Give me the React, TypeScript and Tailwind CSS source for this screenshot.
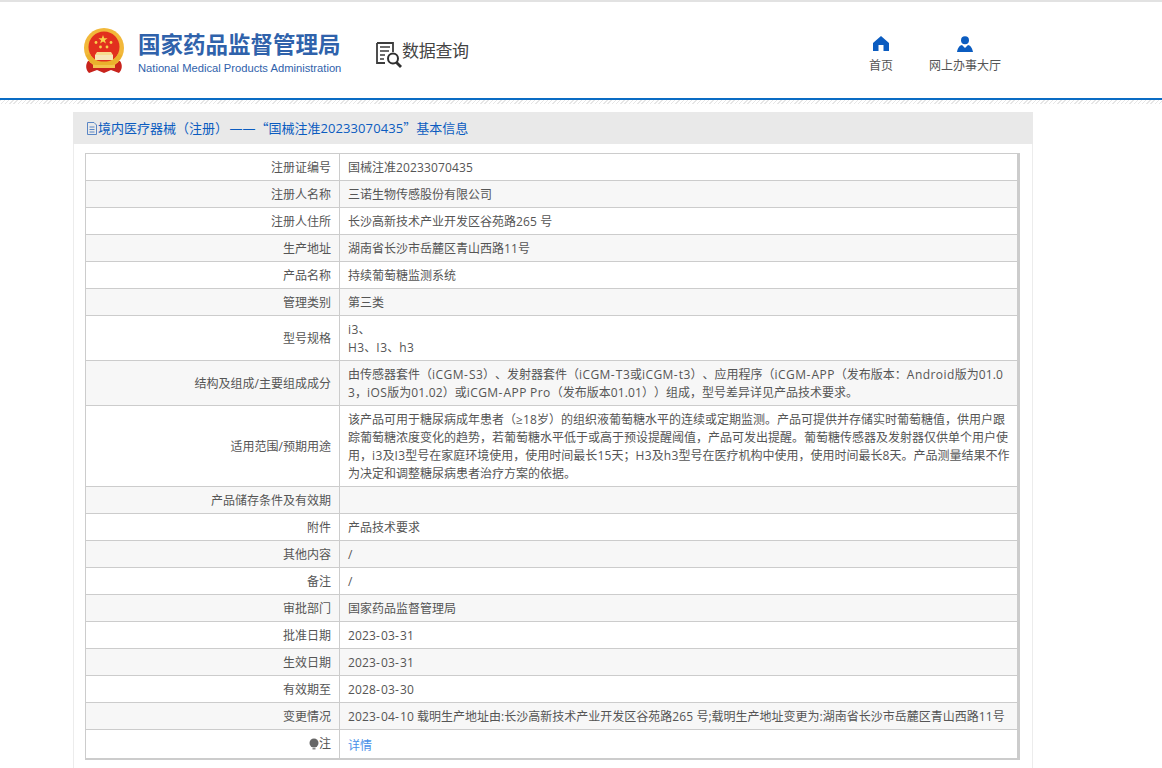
import React from "react";

const FONT = "font-['Open_Sans','Noto_Sans_CJK_SC',sans-serif]";

const rows: { label: string; value: string }[] = [
  { label: "注册证编号", value: "国械注准20233070435" },
  { label: "注册人名称", value: "三诺生物传感股份有限公司" },
  { label: "注册人住所", value: "长沙高新技术产业开发区谷苑路265 号" },
  { label: "生产地址", value: "湖南省长沙市岳麓区青山西路11号" },
  { label: "产品名称", value: "持续葡萄糖监测系统" },
  { label: "管理类别", value: "第三类" },
  { label: "型号规格", value: "i3、\nH3、I3、h3" },
  {
    label: "结构及组成/主要组成成分",
    value: "由传感器套件（iCGM-S3）、发射器套件（iCGM-T3或iCGM-t3）、应用程序（iCGM-APP（发布版本：Android版为01.0\n3，iOS版为01.02）或iCGM-APP Pro（发布版本01.01））组成，型号差异详见产品技术要求。",
  },
  {
    label: "适用范围/预期用途",
    value: "该产品可用于糖尿病成年患者（≥18岁）的组织液葡萄糖水平的连续或定期监测。产品可提供并存储实时葡萄糖值，供用户跟\n踪葡萄糖浓度变化的趋势，若葡萄糖水平低于或高于预设提醒阈值，产品可发出提醒。葡萄糖传感器及发射器仅供单个用户使\n用，i3及I3型号在家庭环境使用，使用时间最长15天；H3及h3型号在医疗机构中使用，使用时间最长8天。产品测量结果不作\n为决定和调整糖尿病患者治疗方案的依据。",
  },
  { label: "产品储存条件及有效期", value: "" },
  { label: "附件", value: "产品技术要求" },
  { label: "其他内容", value: "/" },
  { label: "备注", value: "/" },
  { label: "审批部门", value: "国家药品监督管理局" },
  { label: "批准日期", value: "2023-03-31" },
  { label: "生效日期", value: "2023-03-31" },
  { label: "有效期至", value: "2028-03-30" },
  { label: "变更情况", value: "2023-04-10 载明生产地址由:长沙高新技术产业开发区谷苑路265 号;载明生产地址变更为:湖南省长沙市岳麓区青山西路11号" },
];

function Mixed({ text }: { text: string }) {
  return (
    <>
      {text.split(/([A-Za-z]+|[0-9.]+|-)/).map((part, i) => {
        if (i % 2 === 0) return part;
        if (part === "-") return <span key={i} className="tracking-[1.1px]">{part}</span>;
        if (/[A-Za-z]/.test(part)) return <span key={i} className="tracking-[0.45px]">{part}</span>;
        return <span key={i} className="tracking-[0.14px]">{part}</span>;
      })}
    </>
  );
}

function Emblem() {
  return (
    <svg width="44" height="46" viewBox="0 0 44 46" className="block">
      <path d="M6 33 C3 37 4 42 7 45 L15 42 L22 45 L29 42 L37 45 C40 42 41 37 38 33 Z" fill="#c8231c" />
      <circle cx="22" cy="20" r="20" fill="#f2b83a" />
      <circle cx="22" cy="19" r="15.5" fill="#e2301e" />
      <polygon points="21,7 22.2,10.2 25.6,10.2 22.9,12.3 23.9,15.6 21,13.6 18.1,15.6 19.1,12.3 16.4,10.2 19.8,10.2" fill="#f8d34a" />
      <circle cx="14" cy="14.5" r="1.4" fill="#f8d34a" />
      <circle cx="29" cy="14.5" r="1.4" fill="#f8d34a" />
      <circle cx="18.5" cy="19" r="1.4" fill="#f8d34a" />
      <circle cx="25" cy="19" r="1.4" fill="#f8d34a" />
      <path d="M15 24 H29 L31 27 H13 Z" fill="#f7dc8e" />
      <rect x="13" y="27" width="18" height="5" fill="#f7e7b8" />
      <path d="M4 27 C7 36 15 38 22 38 C29 38 37 36 40 27 L36 26 C33 32 28 33.5 22 33.5 C16 33.5 11 32 8 26 Z" fill="#eab12c" />
      <path d="M11 37 H33 V40 H11 Z" fill="#f3c44c" />
    </svg>
  );
}

function QueryIcon() {
  return (
    <svg width="26" height="26" viewBox="0 0 26 26" className="block" fill="none">
      <path d="M1 1 H17 V10 M1 1 V21 H9" stroke="#3c3c3c" strokeWidth="1.8" />
      <path d="M4 5 H14 M4 9 H13 M4 13 H9 M4 17 H8" stroke="#3c3c3c" strokeWidth="1.6" />
      <circle cx="17" cy="16.5" r="5" stroke="#2f2f2f" strokeWidth="2" />
      <path d="M20.5 20.5 L25 25" stroke="#2f2f2f" strokeWidth="2.8" />
    </svg>
  );
}

export default function App() {
  return (
    <div className={`${FONT} h-[768px] overflow-hidden bg-white text-[12px] text-[#555] [text-spacing-trim:space-all]`}>
      <header className="border-t-2 border-[#e2e2e2]">
        <div className="h-[96px] flex items-start">
          <div className="ml-[82px] mt-[26px]"><Emblem /></div>
          <div className="ml-[12px] mt-[28px] w-[238px]">
            <div className="text-[22.5px] leading-[30px] font-bold text-[#2f62ab] whitespace-nowrap">国家药品监督管理局</div>
            <div className="text-[11.2px] leading-[14px] mt-[1px] text-[#2f62ab] whitespace-nowrap font-['Liberation_Sans',sans-serif]">National Medical Products Administration</div>
          </div>
          <div className="mt-[40px]"><QueryIcon /></div>
          <div className="mt-[36px] text-[17px] tracking-[-0.3px] leading-[26px] text-[#444] whitespace-nowrap">数据查询</div>
          <nav className="ml-auto mr-[161px] mt-[34px] flex gap-[36px]">
            <div className="flex flex-col items-center">
              <svg width="16" height="15" viewBox="0 0 16 15" className="block"><path d="M8 0 L16 7 V15 H10.5 V9 H5.5 V15 H0 V7 Z" fill="#0b5cc0" /></svg>
              <div className="mt-[7px] leading-[16px] text-[#555]">首页</div>
            </div>
            <div className="flex flex-col items-center">
              <svg width="16" height="16" viewBox="0 0 16 16" className="block"><circle cx="8" cy="4.2" r="4" fill="#0b5cc0" /><path d="M0 16 C1 11 3 9.5 5 9 L8 12 L11 9 C13 9.5 15 11 16 16 Z" fill="#0b5cc0" /></svg>
              <div className="mt-[6px] leading-[16px] text-[#555]">网上办事大厅</div>
            </div>
          </nav>
        </div>
        <div className="border-t-2 border-[#0a6cc4] h-[6px] bg-[repeating-linear-gradient(135deg,#e6e6e6_0_1px,transparent_1px_3px)]" />
      </header>

      <main className="mx-[73px] w-[960px] mt-[8px] border-x border-[#ececec] pb-[20px]">
        <h1 className="-mx-px h-[32px] pt-px bg-[#e9e9e9] flex items-center pl-[13px] text-[13px] font-normal text-[#0b5cc0] whitespace-pre">
          <svg width="12" height="13" viewBox="0 0 12 13" fill="none" className="block shrink-0"><path d="M1.5 .5 H8 L10.5 3 V12.5 H1.5 Z M3.5 5 H8.5 M3.5 7.5 H8.5 M3.5 10 H8.5" stroke="#5a86c5" /></svg>
          <span>境内医疗器械（注册） <span className="-ml-[2px]">——</span><span className="font-['Noto_Sans_CJK_SC',sans-serif]">“</span>国械注准<span className="tracking-[0.1px]">20233070435</span><span className="font-['Noto_Sans_CJK_SC',sans-serif]">”</span>基本信息</span>
        </h1>
        <div className="mt-[9px] ml-[11px] w-[935px] border border-[#ccc] border-r-[3px] border-b-2">
          {rows.map((r, i) => (
            <div key={i} className={`flex border-b border-[#ccc] ${i % 2 ? "bg-[#f7f7f7]" : "bg-white"}`}>
              <div className="w-[254px] shrink-0 flex items-center justify-end pt-px pr-[8px] border-r border-[#ccc]">{r.label}</div>
              <div className="flex-1 px-[8px] pt-[5px] pb-[3px] leading-[18px] min-h-[26px] whitespace-pre flex flex-col justify-center">
                {r.value.split("\n").map((line, j) => (
                  <div key={j}><Mixed text={line} /></div>
                ))}
              </div>
            </div>
          ))}
          <div className="flex">
            <div className="w-[254px] shrink-0 flex items-center justify-end pr-[8px] border-r border-[#ccc]">
              <svg width="10" height="12" viewBox="0 0 10 12" className="block"><circle cx="5" cy="5" r="4.5" fill="#666" /><rect x="3.5" y="10" width="3" height="1.5" fill="#888" /></svg>
              注
            </div>
            <div className="flex-1 px-[8px] h-[28px] pt-[3px] flex items-center text-[#4a90e8]">详情</div>
          </div>
        </div>
      </main>
    </div>
  );
}
